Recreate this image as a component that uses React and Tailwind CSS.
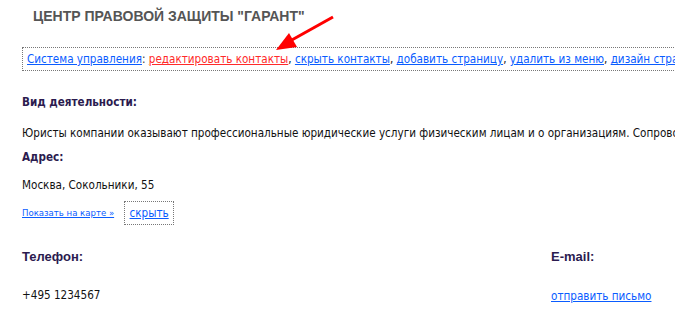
export default function App() {
  const link = 'text-[#0a5cff] underline'
  return (
    <div className="relative w-[675px] h-[310px] overflow-hidden bg-white pl-[22px] font-['DejaVu_Sans_Condensed','DejaVu_Sans',sans-serif] text-[11.6px] text-[#111] whitespace-nowrap">
      <h1 className="ml-[11px] pt-[8px] leading-[16px] text-[14px] font-bold text-[#555] font-['Liberation_Sans',Arial,sans-serif]">
        ЦЕНТР ПРАВОВОЙ ЗАЩИТЫ "ГАРАНТ"
      </h1>

      <div className="mt-[23px] h-[24px] w-[700px] border border-dotted border-[#777] flex items-center pl-[4px] pt-[2px]">
        <a className={link}>Система управления</a>
        <span className="text-[#333]">:&nbsp;</span>
        <a className="text-[#ff2a2a] underline">редактировать контакты</a>
        <span>,&nbsp;</span>
        <a className={link}>скрыть контакты</a>
        <span>,&nbsp;</span>
        <a className={link}>добавить страницу</a>
        <span>,&nbsp;</span>
        <a className={link}>удалить из меню</a>
        <span>,&nbsp;</span>
        <a className={link}>дизайн страницы</a>
      </div>

      <div className="mt-[23px] leading-[16px] font-bold text-[#2b1b4f]">Вид деятельности:</div>
      <div className="mt-[15px] leading-[16px]">
        Юристы компании оказывают профессиональные юридические услуги физическим лицам и о организациям. Сопровождение
      </div>
      <div className="mt-[8px] leading-[16px] font-bold text-[#2b1b4f]">Адрес:</div>
      <div className="mt-[12px] leading-[16px]">Москва, Сокольники, 55</div>

      <div className="mt-[8px] flex items-center gap-[10px]">
        <a className={`${link} text-[9.5px]`}>Показать на карте »</a>
        <div className="h-[24px] w-[50px] border border-dotted border-[#777] flex items-center justify-center pt-[2px]">
          <a className={link}>скрыть</a>
        </div>
      </div>

      <div className="mt-[24px] flex">
        <div className="w-[529px]">
          <div className="leading-[16px] text-[13px] font-bold text-[#2b1b4f] font-['Liberation_Sans',Arial,sans-serif]">Телефон:</div>
          <div className="mt-[22px] leading-[16px]">+495 1234567</div>
        </div>
        <div>
          <div className="leading-[16px] text-[13px] font-bold text-[#2b1b4f] font-['Liberation_Sans',Arial,sans-serif]">E-mail:</div>
          <div className="mt-[23px] leading-[16px]">
            <a className={link}>отправить письмо</a>
          </div>
        </div>
      </div>

      <svg className="absolute left-0 top-0 pointer-events-none" width="675" height="310">
        <line x1="333" y1="17" x2="290" y2="41" stroke="#ff0000" strokeWidth="3" />
        <polygon points="276,50 297,47 289,33" fill="#ff0000" />
      </svg>
    </div>
  )
}
